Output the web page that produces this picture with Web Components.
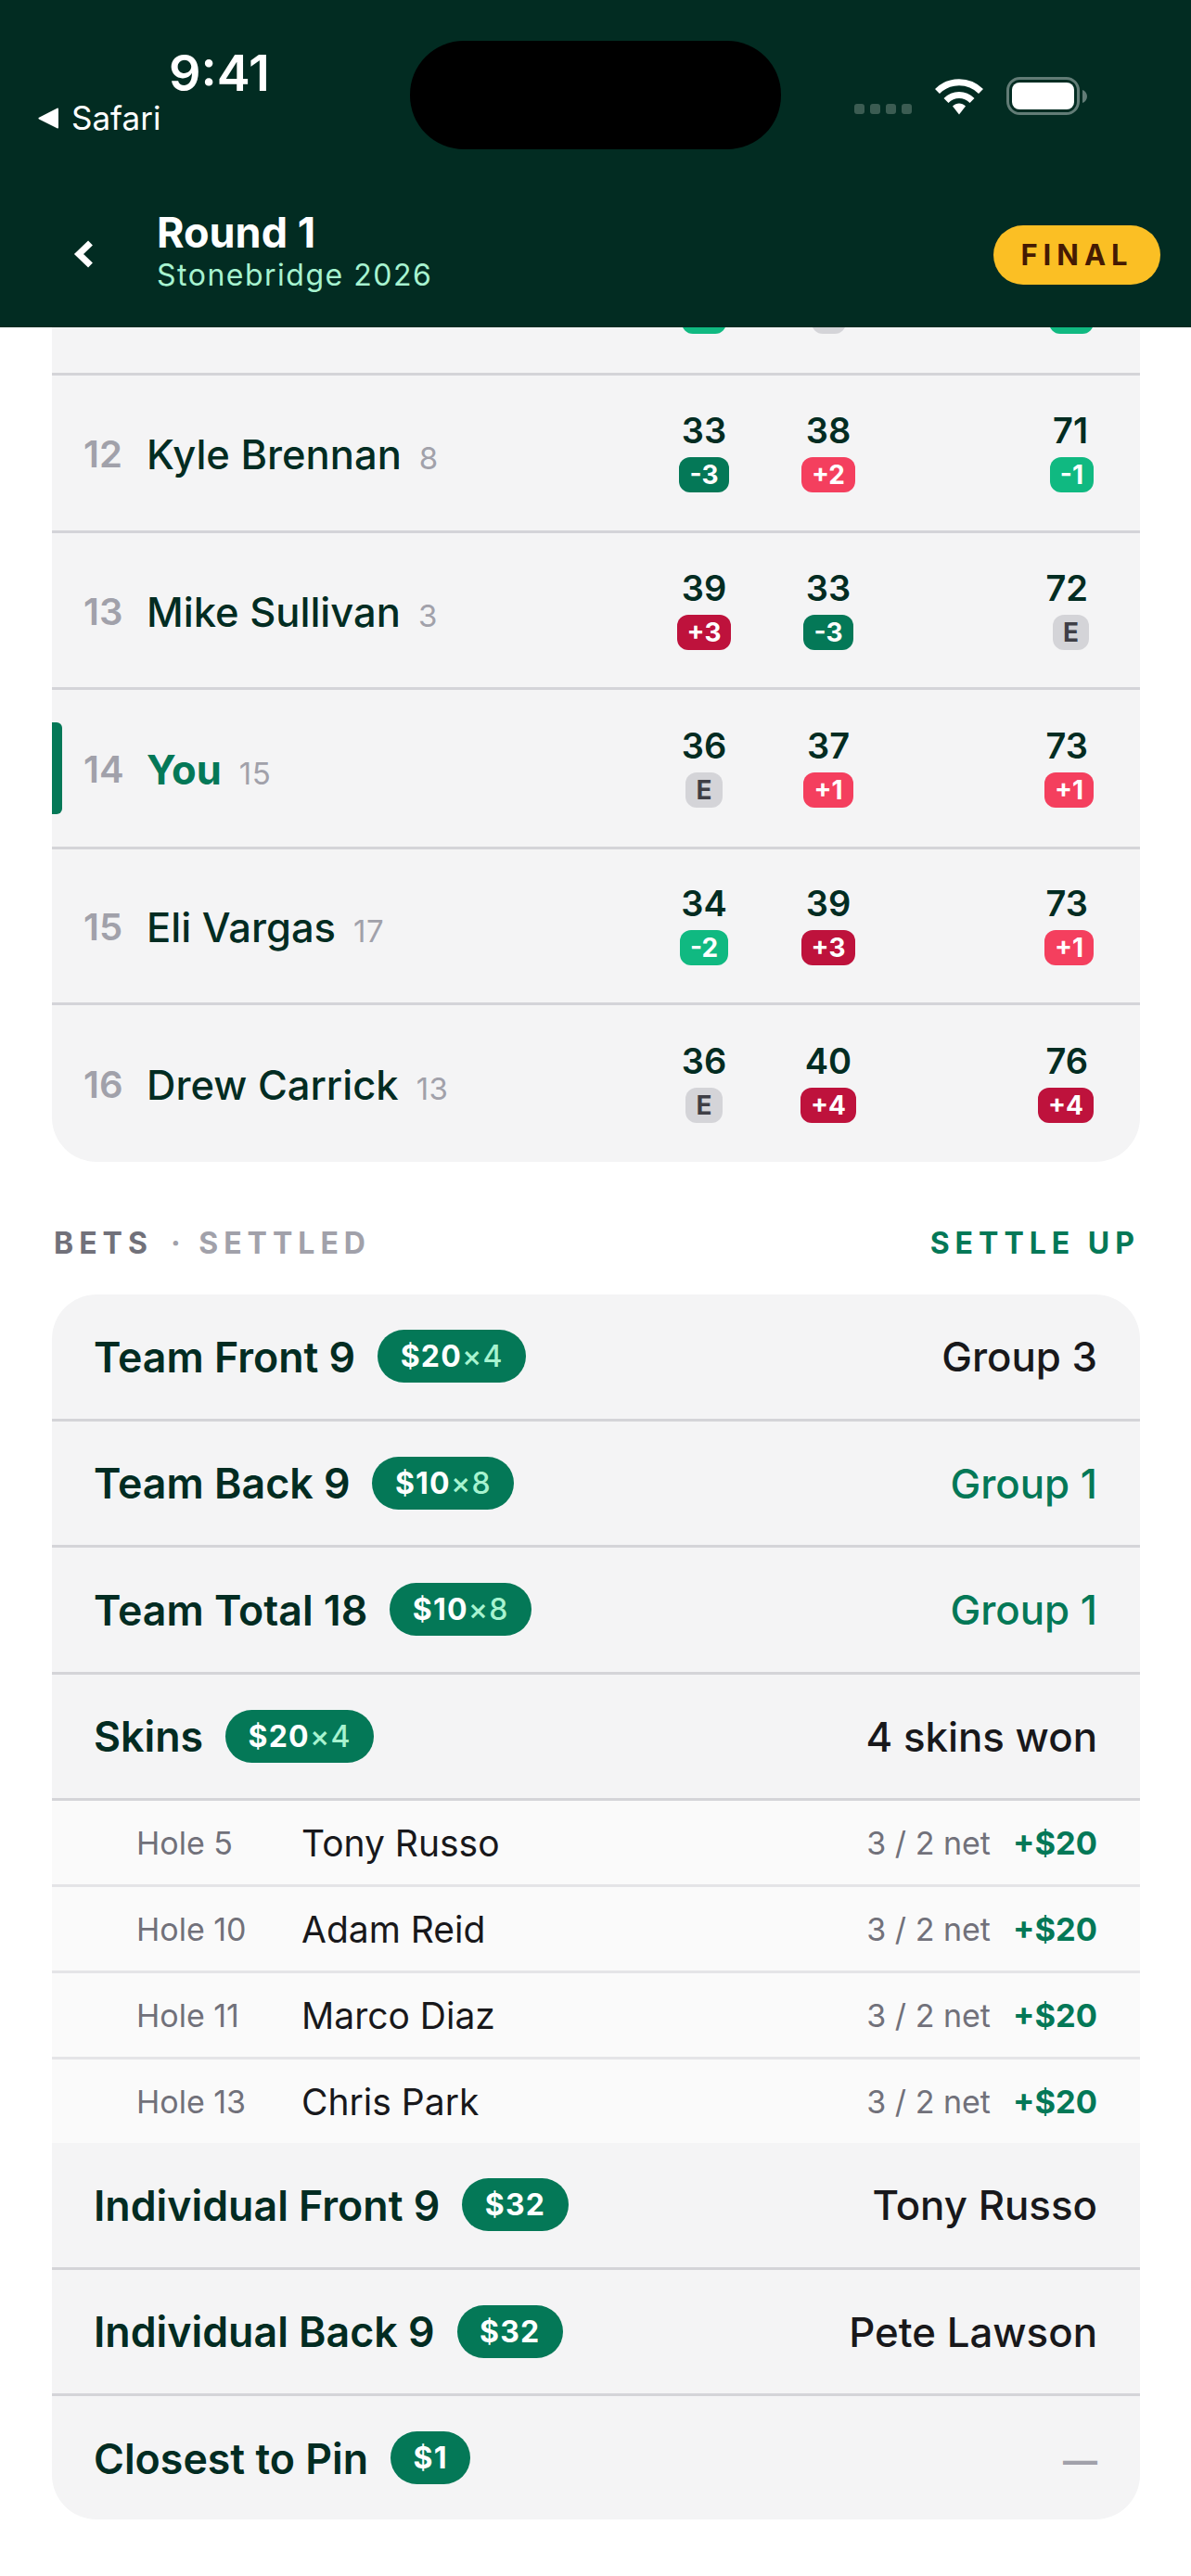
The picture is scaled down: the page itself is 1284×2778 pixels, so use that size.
<!DOCTYPE html>
<html lang="en">
<head>
<meta charset="utf-8">
<title>Round 1</title>
<style>
    html, body {
        margin: 0;
        background: #fff;
        font-family: Inter, "Liberation Sans", sans-serif;
    }
    body {
        width: 1284px;
        height: 2778px;
        overflow: hidden;
    }
</style>
</head>
<body>
<round-header title-text="Round 1" sub-text="Stonebridge 2026" status="FINAL"></round-header>

<round-page>
    <score-card>
        <score-row peek out-delta="-1" in-delta="0" total-delta="-1"></score-row>
        <score-row rank="12" name="Kyle Brennan" hcp="8" out="33" out-delta="-3" back="38" in-delta="2" total="71" total-delta="-1" style="--h:170px"></score-row>
        <score-row rank="13" name="Mike Sullivan" hcp="3" out="39" out-delta="3" back="33" in-delta="-3" total="72" total-delta="0" style="--h:169px"></score-row>
        <score-row rank="14" name="You" hcp="15" out="36" out-delta="0" back="37" in-delta="1" total="73" total-delta="1" me style="--h:172px"></score-row>
        <score-row rank="15" name="Eli Vargas" hcp="17" out="34" out-delta="-2" back="39" in-delta="3" total="73" total-delta="1" style="--h:168px"></score-row>
        <score-row rank="16" name="Drew Carrick" hcp="13" out="36" out-delta="0" back="40" in-delta="4" total="76" total-delta="4" last style="--h:169px"></score-row>
    </score-card>

    <section-head>
        <span slot="title">BETS</span>
        <span slot="note">· SETTLED</span>
        <span slot="action">SETTLE UP</span>
    </section-head>

    <bet-card>
        <bet-row name="Team Front 9" amount="$20" times="×4" result="Group 3"></bet-row>
        <bet-row name="Team Back 9" amount="$10" times="×8" result="Group 1" won></bet-row>
        <bet-row name="Team Total 18" amount="$10" times="×8" result="Group 1" won></bet-row>
        <bet-row name="Skins" amount="$20" times="×4" result="4 skins won"></bet-row>
        <skin-row hole="Hole 5" player="Tony Russo" net="3 / 2 net" payout="+$20"></skin-row>
        <skin-row hole="Hole 10" player="Adam Reid" net="3 / 2 net" payout="+$20"></skin-row>
        <skin-row hole="Hole 11" player="Marco Diaz" net="3 / 2 net" payout="+$20"></skin-row>
        <skin-row hole="Hole 13" player="Chris Park" net="3 / 2 net" payout="+$20" last></skin-row>
        <bet-row name="Individual Front 9" amount="$32" result="Tony Russo"></bet-row>
        <bet-row name="Individual Back 9" amount="$32" result="Pete Lawson"></bet-row>
        <bet-row name="Closest to Pin" amount="$1" result="—" muted last></bet-row>
    </bet-card>
</round-page>

<script>
class RoundHeader extends HTMLElement {
    constructor() {
        super();
        this.attachShadow({ mode: 'open' });
    }

    connectedCallback() {
        this.shadowRoot.innerHTML = `
            <style>
                :host {
                    display: block;
                    position: relative;
                    z-index: 5;
                    height: 353px;
                    background: #022c22;
                    color: #fff;
                }
                .status {
                    display: flex;
                    height: 210px;
                    padding-top: 44px;
                    box-sizing: border-box;
                }
                .left {
                    width: 442px;
                    padding-left: 41px;
                    box-sizing: border-box;
                }
                .time {
                    margin-left: 141px;
                    margin-top: 5px;
                    font-size: 54px;
                    line-height: 60px;
                    font-weight: 600;
                }
                .back-app {
                    display: flex;
                    align-items: center;
                    gap: 13px;
                    font-size: 35px;
                    line-height: 40px;
                    margin-top: -2px;
                }
                .island {
                    width: 400px;
                    height: 117px;
                    border-radius: 58px;
                    background: #000;
                }
                .right {
                    display: flex;
                    align-items: flex-start;
                    padding-left: 79px;
                    padding-top: 39px;
                }
                .dots {
                    display: flex;
                    gap: 6px;
                    margin-top: 29px;
                    margin-right: 24px;
                }
                .dots i {
                    width: 11px;
                    height: 11px;
                    border-radius: 3px;
                    background: #3b5c52;
                }
                .wifi { margin-right: 24px; }
                .nav {
                    display: flex;
                    align-items: center;
                    height: 129px;
                    padding: 0 33px 0 79px;
                }
                .chevron { margin-bottom: 2px; }
                .titles {
                    margin-left: 68px;
                    margin-bottom: 8px;
                }
                .title {
                    font-size: 45px;
                    line-height: 52px;
                    font-weight: 700;
                }
                .sub {
                    font-size: 32px;
                    line-height: 40px;
                    color: #a7f3d0;
                    letter-spacing: 1.500px;
                }
                .final {
                    margin-left: auto;
                    width: 180px;
                    height: 64px;
                    border-radius: 32px;
                    background: #fbbf24;
                    color: #451a03;
                    font-size: 31px;
                    font-weight: 700;
                    letter-spacing: 6px;
                    display: flex;
                    align-items: center;
                    justify-content: center;
                }
            </style>
            <div class="status">
                <div class="left">
                    <div class="time">9:41</div>
                    <div class="back-app">
                        <svg width="23" height="23" viewBox="0 0 23 23"><path d="M22 1.5v20a1 1 0 0 1-1.5.8L1 12.5a1 1 0 0 1 0-1.8L20.500.7A1 1 0 0 1 22 1.500z" fill="#fff"/></svg>
                        <span>Safari</span>
                    </div>
                </div>
                <div class="island"></div>
                <div class="right">
                    <div class="dots"><i></i><i></i><i></i><i></i></div>
                    <svg class="wifi" width="54" height="41" viewBox="0 0 54 41" fill="none" stroke="#fff" stroke-width="7">
                        <path d="M3.500 15.500C16.500 2.500 37.500 2.500 50.500 15.500"/>
                        <path d="M13 25.500C21 17.500 33 17.500 41 25.500"/>
                        <path d="M20 31.500L27 40.500L34 31.500C30 27.500 24 27.500 20 31.500z" fill="#fff" stroke="none"/>
                    </svg>
                    <svg width="88" height="42" viewBox="0 0 88 42" fill="none">
                        <rect x="1.500" y="1.500" width="76" height="38" rx="13" stroke="#fff" stroke-opacity=".38" stroke-width="3"/>
                        <rect x="6" y="6" width="67" height="29" rx="8" fill="#fff"/>
                        <path d="M82 14c3 1 5 4 5 7s-2 6-5 7z" fill="#fff" fill-opacity=".38"/>
                    </svg>
                </div>
            </div>
            <div class="nav">
                <svg class="chevron" width="22" height="30" viewBox="0 0 22 30" fill="none"><path d="M18.500 3L6 15l12.500 12" stroke="#fff" stroke-width="7"/></svg>
                <div class="titles">
                    <div class="title">${this.getAttribute('title-text')}</div>
                    <div class="sub">${this.getAttribute('sub-text')}</div>
                </div>
                <div class="final">${this.getAttribute('status')}</div>
            </div>
        `;
    }
}

class RoundPage extends HTMLElement {
    constructor() {
        super();
        this.attachShadow({ mode: 'open' });
        this.shadowRoot.innerHTML = `
            <style>
                :host {
                    display: block;
                    padding: 0 55px 0 56px;
                }
            </style>
            <slot></slot>
        `;
    }
}

class ScoreCard extends HTMLElement {
    constructor() {
        super();
        this.attachShadow({ mode: 'open' });
        this.shadowRoot.innerHTML = `
            <style>
                :host {
                    display: block;
                    background: #f4f4f5;
                    border-radius: 0 0 48px 48px;
                    overflow: hidden;
                }
            </style>
            <slot></slot>
        `;
    }
}

class ScoreBadge extends HTMLElement {
    constructor() {
        super();
        this.attachShadow({ mode: 'open' });
    }

    connectedCallback() {
        const delta = Number(this.getAttribute('delta'));
        let bg = '#d4d4d8';
        let fg = '#3f3f46';
        let label = 'E';
        if (delta !== 0) {
            fg = '#fff';
            label = delta > 0 ? `+${delta}` : `${delta}`;
        }
        if (delta === 1 || delta === 2) bg = '#f43f5e';
        if (delta >= 3) bg = '#be123c';
        if (delta === -1 || delta === -2) bg = '#10b981';
        if (delta <= -3) bg = '#047857';
        // row scrolled under the header: only the bottom of the badge shows
        if (this.hasAttribute('blank')) label = '';
        this.shadowRoot.innerHTML = `
            <style>
                :host {
                    display: inline-flex;
                    align-items: center;
                    justify-content: center;
                    height: 38px;
                    padding: 0 11px;
                    min-width: 16px;
                    border-radius: 12px;
                    font-size: 28px;
                    font-weight: 700;
                    background: ${bg};
                    color: ${fg};
                }
                :host([blank]) {
                    min-width: ${delta === 0 ? 15 : 26}px;
                }
            </style>
            ${label}
        `;
    }
}

class ScoreRow extends HTMLElement {
    constructor() {
        super();
        this.attachShadow({ mode: 'open' });
    }

    _cell(cls, num, delta) {
        const blank = this.hasAttribute('peek') ? 'blank' : '';
        return `<div class="cell ${cls}">
            ${num ? `<div class="num">${num}</div>` : ''}
            <score-badge delta="${delta}" ${blank} class="${Number(delta) === 0 ? 'even' : ''}"></score-badge>
        </div>`;
    }

    connectedCallback() {
        const at = (n) => this.getAttribute(n);
        const peek = this.hasAttribute('peek');
        this.shadowRoot.innerHTML = `
            <style>
                :host {
                    display: block;
                    position: relative;
                }
                .row {
                    display: flex;
                    align-items: center;
                    box-sizing: border-box;
                    height: var(--h, 170px);
                    padding-left: 34px;
                    border-bottom: 3px solid #d4d4d8;
                }
                :host([last]) .row { border-bottom: 0; }
                :host([peek]) .row {
                    height: 52px;
                    align-items: flex-start;
                }
                :host([peek]) .scores { margin-top: 0; }
                :host([peek]) score-badge { margin-top: -31px; }
                .rank {
                    width: 68px;
                    margin-top: 2px;
                    font-size: 40px;
                    font-weight: 600;
                    color: #a1a1aa;
                }
                .who {
                    display: flex;
                    align-items: baseline;
                    margin-top: 3px;
                }
                .name {
                    font-size: 43.500px;
                    font-weight: 500;
                    color: #022c22;
                }
                :host([me]) .name {
                    font-weight: 700;
                    color: #047857;
                }
                .hcp {
                    margin-left: 19px;
                    font-size: 33px;
                    letter-spacing: .5px;
                    color: #a1a1aa;
                }
                .scores {
                    display: flex;
                    margin-left: auto;
                    margin-top: -5px;
                }
                .cell {
                    display: flex;
                    flex-direction: column;
                    align-items: center;
                    gap: 6px;
                }
                .out, .back { width: 134px; }
                .back { margin-right: 117px; }
                .total {
                    width: 152px;
                    align-items: flex-end;
                    padding-right: 50px;
                    box-sizing: border-box;
                }
                .total .num { margin-right: 6px; }
                .total .even { margin-right: 5px; }
                .num {
                    font-size: 38px;
                    line-height: 46px;
                    font-weight: 600;
                    color: #022c22;
                }
                .bar {
                    position: absolute;
                    left: 0;
                    top: 35px;
                    width: 11px;
                    height: 99px;
                    border-radius: 0 6px 6px 0;
                    background: #047857;
                }
            </style>
            ${this.hasAttribute('me') ? '<div class="bar"></div>' : ''}
            <div class="row">
                ${peek ? '' : `
                <div class="rank">${at('rank')}</div>
                <div class="who">
                    <div class="name">${at('name')}</div>
                    <div class="hcp">${at('hcp')}</div>
                </div>`}
                <div class="scores">
                    ${this._cell('out', at('out'), at('out-delta'))}
                    ${this._cell('back', at('back'), at('in-delta'))}
                    ${this._cell('total', at('total'), at('total-delta'))}
                </div>
            </div>
        `;
    }
}

class SectionHead extends HTMLElement {
    constructor() {
        super();
        this.attachShadow({ mode: 'open' });
        this.shadowRoot.innerHTML = `
            <style>
                :host {
                    display: flex;
                    align-items: center;
                    box-sizing: border-box;
                    height: 143px;
                    padding: 31px 0 0 2px;
                    font-size: 32px;
                    font-weight: 700;
                    letter-spacing: 6px;
                }
                .title { color: #71717a; }
                .note {
                    color: #a1a1aa;
                    margin-left: 19px;
                }
                .action {
                    color: #047857;
                    margin-left: auto;
                }
            </style>
            <span class="title"><slot name="title"></slot></span>
            <span class="note"><slot name="note"></slot></span>
            <span class="action"><slot name="action"></slot></span>
        `;
    }
}

class BetCard extends HTMLElement {
    constructor() {
        super();
        this.attachShadow({ mode: 'open' });
        this.shadowRoot.innerHTML = `
            <style>
                :host {
                    display: block;
                    background: #f4f4f5;
                    border-radius: 48px;
                    overflow: hidden;
                }
            </style>
            <slot></slot>
        `;
    }
}

class BetRow extends HTMLElement {
    constructor() {
        super();
        this.attachShadow({ mode: 'open' });
    }

    connectedCallback() {
        const times = this.getAttribute('times');
        this.shadowRoot.innerHTML = `
            <style>
                :host {
                    display: flex;
                    align-items: center;
                    box-sizing: border-box;
                    height: 136.500px;
                    padding: 0 46px 0 45px;
                    border-bottom: 3px solid #d4d4d8;
                }
                :host([last]) {
                    border-bottom: 0;
                    height: 133px;
                }
                .name {
                    margin-top: 2px;
                    font-size: 44.700px;
                    font-weight: 600;
                    color: #022c22;
                }
                .pill {
                    display: flex;
                    align-items: center;
                    height: 57px;
                    margin-left: 24px;
                    padding: 0 24.500px;
                    border-radius: 29px;
                    background: #047857;
                    color: #fff;
                    font-size: 32px;
                    font-weight: 700;
                    letter-spacing: 1.200px;
                }
                .pill span {
                    color: #a7f3d0;
                    font-weight: 500;
                }
                .result {
                    margin-left: auto;
                    margin-top: 2px;
                    font-size: 43.800px;
                    font-weight: 450;
                    color: #18181b;
                }
                :host([won]) .result { color: #047857; }
                :host([muted]) .result {
                    color: #a1a1aa;
                    font-size: 37px;
                    font-weight: 700;
                    margin-top: 6px;
                }
            </style>
            <div class="name">${this.getAttribute('name')}</div>
            <div class="pill">${this.getAttribute('amount')}${times ? `<span>${times}</span>` : ''}</div>
            <div class="result">${this.getAttribute('result')}</div>
        `;
    }
}

class SkinRow extends HTMLElement {
    constructor() {
        super();
        this.attachShadow({ mode: 'open' });
    }

    connectedCallback() {
        this.shadowRoot.innerHTML = `
            <style>
                :host {
                    display: flex;
                    align-items: center;
                    box-sizing: border-box;
                    height: 93px;
                    padding: 0 46px 0 91px;
                    background: #fafafa;
                    border-bottom: 3px solid #e4e4e7;
                }
                :host([last]) {
                    border-bottom: 0;
                    height: 90px;
                }
                .hole {
                    width: 178px;
                    font-size: 34px;
                    color: #71717a;
                }
                .player {
                    font-size: 39px;
                    color: #18181b;
                }
                .net {
                    margin-left: auto;
                    font-size: 34px;
                    color: #71717a;
                }
                .pay {
                    margin-left: 24px;
                    font-size: 34.500px;
                    font-weight: 700;
                    color: #047857;
                }
            </style>
            <div class="hole">${this.getAttribute('hole')}</div>
            <div class="player">${this.getAttribute('player')}</div>
            <div class="net">${this.getAttribute('net')}</div>
            <div class="pay">${this.getAttribute('payout')}</div>
        `;
    }
}

customElements.define('round-header', RoundHeader);
customElements.define('round-page', RoundPage);
customElements.define('score-card', ScoreCard);
customElements.define('score-badge', ScoreBadge);
customElements.define('score-row', ScoreRow);
customElements.define('section-head', SectionHead);
customElements.define('bet-card', BetCard);
customElements.define('bet-row', BetRow);
customElements.define('skin-row', SkinRow);
</script>
</body>
</html>
